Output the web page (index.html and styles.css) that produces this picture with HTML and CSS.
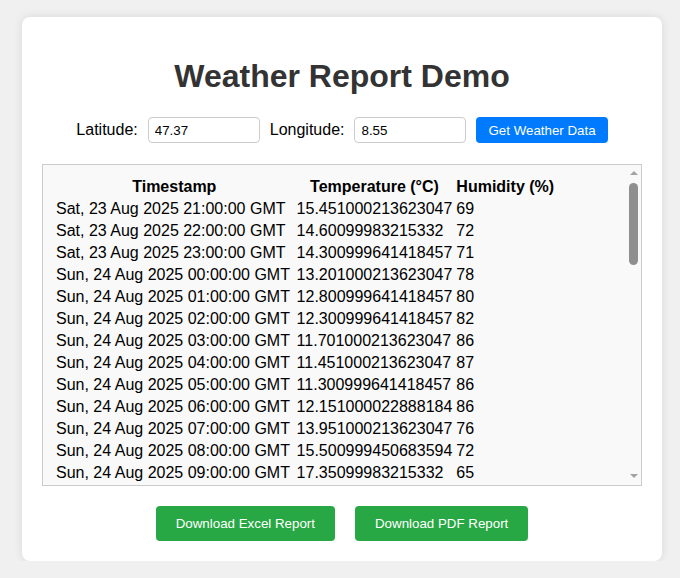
FILE: index.html
```html
<!DOCTYPE html>
<html lang="en">
<head>
<meta charset="utf-8">
<title>Weather Report Demo</title>
<link rel="stylesheet" href="styles.css">
</head>
<body>
<div class="card">
  <h1 class="title">Weather Report Demo</h1>
  <div class="controls">
    <label class="lbl" for="lat">Latitude:</label>
    <input class="inp" id="lat" type="text" value="47.37">
    <label class="lbl" for="lon">Longitude:</label>
    <input class="inp" id="lon" type="text" value="8.55">
    <button class="btn-blue" type="button">Get Weather Data</button>
  </div>
  <div class="table-wrap">
    <div class="table-box">
      <table class="data">
        <thead>
          <tr><th>Timestamp</th><th>Temperature (°C)</th><th>Humidity (%)</th></tr>
        </thead>
        <tbody>
          <tr><td>Sat, 23 Aug 2025 21:00:00 GMT</td><td>15.451000213623047</td><td>69</td></tr>
          <tr><td>Sat, 23 Aug 2025 22:00:00 GMT</td><td>14.60099983215332</td><td>72</td></tr>
          <tr><td>Sat, 23 Aug 2025 23:00:00 GMT</td><td>14.300999641418457</td><td>71</td></tr>
          <tr><td>Sun, 24 Aug 2025 00:00:00 GMT</td><td>13.201000213623047</td><td>78</td></tr>
          <tr><td>Sun, 24 Aug 2025 01:00:00 GMT</td><td>12.800999641418457</td><td>80</td></tr>
          <tr><td>Sun, 24 Aug 2025 02:00:00 GMT</td><td>12.300999641418457</td><td>82</td></tr>
          <tr><td>Sun, 24 Aug 2025 03:00:00 GMT</td><td>11.701000213623047</td><td>86</td></tr>
          <tr><td>Sun, 24 Aug 2025 04:00:00 GMT</td><td>11.451000213623047</td><td>87</td></tr>
          <tr><td>Sun, 24 Aug 2025 05:00:00 GMT</td><td>11.300999641418457</td><td>86</td></tr>
          <tr><td>Sun, 24 Aug 2025 06:00:00 GMT</td><td>12.151000022888184</td><td>86</td></tr>
          <tr><td>Sun, 24 Aug 2025 07:00:00 GMT</td><td>13.951000213623047</td><td>76</td></tr>
          <tr><td>Sun, 24 Aug 2025 08:00:00 GMT</td><td>15.500999450683594</td><td>72</td></tr>
          <tr><td>Sun, 24 Aug 2025 09:00:00 GMT</td><td>17.35099983215332</td><td>65</td></tr>
          <tr><td>Sun, 24 Aug 2025 10:00:00 GMT</td><td>18.951000213623047</td><td>58</td></tr>
          <tr><td>Sun, 24 Aug 2025 11:00:00 GMT</td><td>20.35099983215332</td><td>52</td></tr>
          <tr><td>Sun, 24 Aug 2025 12:00:00 GMT</td><td>21.500999450683594</td><td>47</td></tr>
          <tr><td>Sun, 24 Aug 2025 13:00:00 GMT</td><td>22.451000213623047</td><td>43</td></tr>
          <tr><td>Sun, 24 Aug 2025 14:00:00 GMT</td><td>23.101000213623047</td><td>41</td></tr>
          <tr><td>Sun, 24 Aug 2025 15:00:00 GMT</td><td>23.500999450683594</td><td>40</td></tr>
          <tr><td>Sun, 24 Aug 2025 16:00:00 GMT</td><td>23.35099983215332</td><td>41</td></tr>
          <tr><td>Sun, 24 Aug 2025 17:00:00 GMT</td><td>22.701000213623047</td><td>44</td></tr>
          <tr><td>Sun, 24 Aug 2025 18:00:00 GMT</td><td>21.451000213623047</td><td>49</td></tr>
          <tr><td>Sun, 24 Aug 2025 19:00:00 GMT</td><td>19.60099983215332</td><td>56</td></tr>
          <tr><td>Sun, 24 Aug 2025 20:00:00 GMT</td><td>17.951000213623047</td><td>63</td></tr>
          <tr><td>Sun, 24 Aug 2025 21:00:00 GMT</td><td>16.800999641418457</td><td>68</td></tr>
          <tr><td>Sun, 24 Aug 2025 22:00:00 GMT</td><td>15.901000022888184</td><td>72</td></tr>
          <tr><td>Sun, 24 Aug 2025 23:00:00 GMT</td><td>15.201000213623047</td><td>75</td></tr>
          <tr><td>Mon, 25 Aug 2025 00:00:00 GMT</td><td>14.651000022888184</td><td>78</td></tr>
          <tr><td>Mon, 25 Aug 2025 01:00:00 GMT</td><td>14.101000213623047</td><td>80</td></tr>
          <tr><td>Mon, 25 Aug 2025 02:00:00 GMT</td><td>13.60099983215332</td><td>82</td></tr>
          <tr><td>Mon, 25 Aug 2025 03:00:00 GMT</td><td>13.201000213623047</td><td>84</td></tr>
          <tr><td>Mon, 25 Aug 2025 04:00:00 GMT</td><td>12.901000022888184</td><td>85</td></tr>
          <tr><td>Mon, 25 Aug 2025 05:00:00 GMT</td><td>12.750999450683594</td><td>86</td></tr>
          <tr><td>Mon, 25 Aug 2025 06:00:00 GMT</td><td>13.451000213623047</td><td>84</td></tr>
          <tr><td>Mon, 25 Aug 2025 07:00:00 GMT</td><td>15.10099983215332</td><td>78</td></tr>
          <tr><td>Mon, 25 Aug 2025 08:00:00 GMT</td><td>16.951000213623047</td><td>71</td></tr>
          <tr><td>Mon, 25 Aug 2025 09:00:00 GMT</td><td>18.800999641418457</td><td>63</td></tr>
          <tr><td>Mon, 25 Aug 2025 10:00:00 GMT</td><td>20.35099983215332</td><td>56</td></tr>
          <tr><td>Mon, 25 Aug 2025 11:00:00 GMT</td><td>21.701000213623047</td><td>50</td></tr>
          <tr><td>Mon, 25 Aug 2025 12:00:00 GMT</td><td>22.800999641418457</td><td>46</td></tr>
          <tr><td>Mon, 25 Aug 2025 13:00:00 GMT</td><td>23.651000022888184</td><td>43</td></tr>
          <tr><td>Mon, 25 Aug 2025 14:00:00 GMT</td><td>24.201000213623047</td><td>41</td></tr>
          <tr><td>Mon, 25 Aug 2025 15:00:00 GMT</td><td>24.451000213623047</td><td>40</td></tr>
          <tr><td>Mon, 25 Aug 2025 16:00:00 GMT</td><td>24.201000213623047</td><td>41</td></tr>
          <tr><td>Mon, 25 Aug 2025 17:00:00 GMT</td><td>23.500999450683594</td><td>44</td></tr>
          <tr><td>Mon, 25 Aug 2025 18:00:00 GMT</td><td>22.151000022888184</td><td>49</td></tr>
          <tr><td>Mon, 25 Aug 2025 19:00:00 GMT</td><td>20.35099983215332</td><td>55</td></tr>
          <tr><td>Mon, 25 Aug 2025 20:00:00 GMT</td><td>18.701000213623047</td><td>61</td></tr>
        </tbody>
      </table>
    </div>
    <div class="sbar" aria-hidden="true">
      <span class="sbar-btn"><span class="tri-up"></span></span>
      <span class="sbar-thumb"></span>
      <span class="sbar-fill"></span>
      <span class="sbar-btn"><span class="tri-down"></span></span>
    </div>
  </div>
  <div class="actions">
    <button class="btn-green" type="button">Download Excel Report</button>
    <button class="btn-green" type="button">Download PDF Report</button>
  </div>
</div>
</body>
</html>
```
FILE: styles.css
```css
html, body {
  margin: 0;
  background: #f0f0f0;
}
body {
  padding: 17px 0 0 22px;
  font-family: "Liberation Sans", Arial, sans-serif;
  color: #000;
}
.card {
  box-sizing: border-box;
  width: 640px;
  background: #fff;
  border-radius: 8px;
  box-shadow: 0 0 10px rgba(0, 0, 0, 0.1);
  padding: 20px;
}
.title {
  margin: 21px 0 22px;
  font-size: 32px;
  line-height: 37px;
  font-weight: bold;
  text-align: center;
  color: #333;
}
.controls {
  display: flex;
  align-items: center;
  justify-content: center;
  gap: 10px;
}
.lbl {
  font-size: 16px;
  line-height: 18px;
}
.inp {
  box-sizing: border-box;
  width: 112px;
  height: 26px;
  padding: 4px 6px;
  border: 1px solid #ccc;
  border-radius: 4px;
  font-family: "Liberation Sans", Arial, sans-serif;
  font-size: 13.333px;
  color: #000;
  background: #fff;
}
.btn-blue {
  height: 26px;
  padding: 0 12px;
  border: none;
  border-radius: 4px;
  background: #007bff;
  color: #fff;
  font-family: "Liberation Sans", Arial, sans-serif;
  font-size: 13.333px;
}
.table-wrap {
  position: relative;
  margin-top: 21px;
}
.table-box {
  height: 300px;
  padding: 10px;
  border: 1px solid #ccc;
  background: #f9f9f9;
  overflow-y: scroll;
}
.sbar {
  position: absolute;
  top: 1px;
  right: 1px;
  bottom: 1px;
  width: 15px;
  display: flex;
  flex-direction: column;
  align-items: center;
  background: #f9f9f9;
}
.sbar-btn {
  height: 16px;
  width: 15px;
  display: flex;
  align-items: center;
  justify-content: center;
  flex: none;
}
.tri-up {
  width: 0;
  height: 0;
  border-left: 4px solid transparent;
  border-right: 4px solid transparent;
  border-bottom: 4px solid #a3a3a3;
}
.tri-down {
  width: 0;
  height: 0;
  margin-top: -3px;
  border-left: 4px solid transparent;
  border-right: 4px solid transparent;
  border-top: 4px solid #a3a3a3;
}
.sbar-thumb {
  width: 9px;
  height: 82px;
  margin-top: 2px;
  border-radius: 5px;
  background: #8f8f8f;
  flex: none;
}
.sbar-fill {
  flex: 1;
}
.data {
  font-size: 16px;
  color: #000;
}
.data th {
  font-weight: bold;
  text-align: center;
}
.data td {
  text-align: left;
}
.actions {
  display: flex;
  justify-content: center;
  gap: 20px;
  margin-top: 20px;
}
.btn-green {
  padding: 10px 20px;
  border: none;
  border-radius: 4px;
  background: #28a745;
  color: #fff;
  font-family: "Liberation Sans", Arial, sans-serif;
  font-size: 13.333px;
  line-height: 15px;
}
```
